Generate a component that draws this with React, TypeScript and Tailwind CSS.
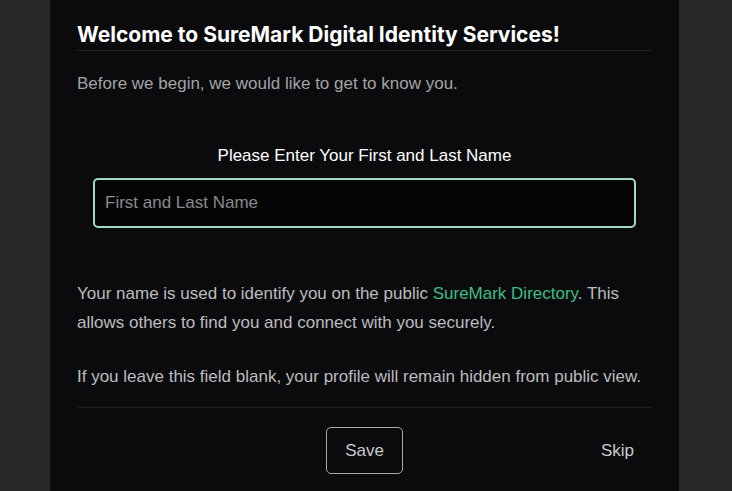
import { useState } from 'react';

export default function App() {
  const [name, setName] = useState('');

  return (
    <div className="min-h-[491px] w-full bg-[#28282a] flex pl-[50px] font-['Liberation_Sans',Arial,sans-serif]">
      <div className="w-[629px] bg-[#0b0b0d] px-[27px] pt-[21px] pb-[18px]">
        <h1 className="text-[21px] leading-[28px] font-bold text-white font-['Inter',sans-serif] pb-[1px] border-b border-[#1f1f22]">
          Welcome to SureMark Digital Identity Services!
        </h1>
        <p className="mt-[21px] text-[17px] leading-[24px] text-[#a3a3a6]">
          Before we begin, we would like to get to know you.
        </p>

        <div className="mt-[48px] px-[16px]">
          <label className="block text-center text-[17px] leading-[24px] text-white">
            Please Enter Your First and Last Name
          </label>
          <input
            type="text"
            value={name}
            onChange={(e) => setName(e.target.value)}
            placeholder="First and Last Name"
            className="mt-[10px] w-full h-[50px] rounded-[5px] border-2 border-[#9fdcbf] bg-[#050506] px-[10px] text-[17px] text-white placeholder:text-[#8a8a8d] outline-none"
          />
        </div>

        <p className="mt-[51px] text-[17px] leading-[29px] text-[#bcbcbf]">
          Your name is used to identify you on the public{' '}
          <a href="#" className="text-[#3dbf84]">SureMark Directory</a>. This allows others to find you and connect with you securely.
        </p>
        <p className="mt-[25px] text-[17px] leading-[29px] text-[#bcbcbf]">
          If you leave this field blank, your profile will remain hidden from public view.
        </p>

        <div className="mt-[16px] border-t border-[#1f1f22] pt-[19px] grid grid-cols-[1fr_auto_1fr] items-center">
          <div />
          <button className="w-[77px] h-[47px] rounded-[5px] border border-[#a9a9ac] text-[17px] text-[#c9c9cc]">
            Save
          </button>
          <div className="flex justify-end">
            <button className="px-[18px] py-[8px] text-[17px] text-[#c9c9cc]">Skip</button>
          </div>
        </div>
      </div>
    </div>
  );
}
